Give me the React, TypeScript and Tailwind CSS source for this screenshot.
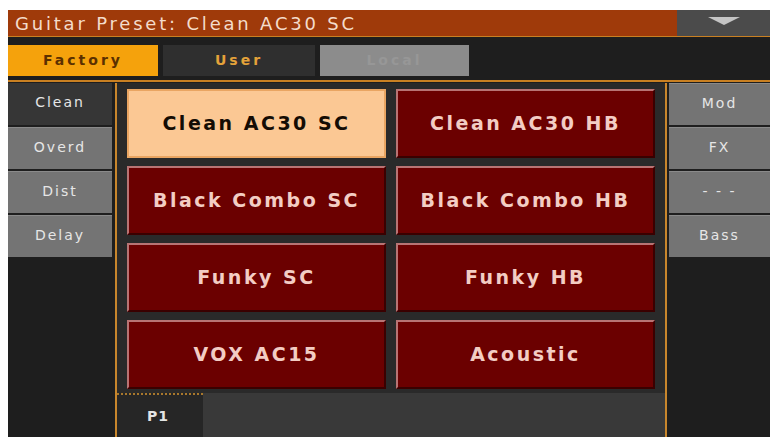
const PRESETS = [
  { name: "Clean AC30 SC", selected: true },
  { name: "Clean AC30 HB" },
  { name: "Black Combo SC" },
  { name: "Black Combo HB" },
  { name: "Funky SC" },
  { name: "Funky HB" },
  { name: "VOX AC15" },
  { name: "Acoustic" },
];

const LEFT_TABS = ["Clean", "Overd", "Dist", "Delay"];
const RIGHT_TABS = ["Mod", "FX", "- - -", "Bass"];

function SideTab({ label, active }: { label: string; active?: boolean }) {
  return (
    <div
      className={
        "h-[42px] flex items-center justify-center pb-[3px] text-[14px] tracking-[2px] text-[#e6e6e6] whitespace-nowrap " +
        (active ? "bg-[#363636]" : "bg-[#747474] border-t border-[#8a8a8a]")
      }
    >
      {label}
    </div>
  );
}

function PresetButton({ name, selected }: { name: string; selected?: boolean }) {
  if (selected) {
    return (
      <div className="flex items-center justify-center whitespace-nowrap bg-[#fbc894] border-2 border-[#e9a562] text-[#140c04] font-bold text-[19px] tracking-[2.5px]">
        {name}
      </div>
    );
  }
  return (
    <div className="flex items-center justify-center whitespace-nowrap bg-[#6b0000] border-t-2 border-l-2 border-[#b87474] border-b-2 border-r-2 border-b-[#3a0000] border-r-[#3a0000] text-[#f3cdc4] font-bold text-[19px] tracking-[2.5px]">
      {name}
    </div>
  );
}

export default function App() {
  return (
    <div className="w-[773px] h-[437px] bg-white pt-[10px] pl-[8px] pr-[3px] overflow-hidden font-['DejaVu_Sans',sans-serif]">
      <div className="flex flex-col h-full bg-[#1e1e1e]">
        {/* Title bar */}
        <div className="flex h-[26px]">
          <div className="flex-1 bg-[#9f3a0a] flex items-center pl-[7px] text-[18px] tracking-[2.8px] whitespace-nowrap text-[#f4dccb]">
            Guitar Preset: Clean AC30 SC
          </div>
          <div className="w-[93px] bg-[#4b4b4b] flex items-start justify-center pt-[7px]">
            <svg width="32" height="8" viewBox="0 0 32 8">
              <polygon points="0,0 32,0 16,8" fill="#c4c4c4" />
            </svg>
          </div>
        </div>
        <div className="h-[1px] bg-[#c98022]" />

        {/* Library tabs */}
        <div className="flex gap-[5px] pt-[8px] pb-[4px] h-[43px]">
          <div className="w-[150px] bg-[#f5a20c] flex items-center justify-center font-bold text-[14px] tracking-[3px] text-[#5b3000]">
            Factory
          </div>
          <div className="w-[152px] bg-[#2f2f2f] flex items-center justify-center font-bold text-[14px] tracking-[3px] text-[#e4a23a]">
            User
          </div>
          <div className="w-[149px] bg-[#8c8c8c] flex items-center justify-center font-bold text-[14px] tracking-[3px] text-[#979797]">
            Local
          </div>
        </div>
        <div className="h-[2px] bg-[#c98022]" />

        {/* Main area */}
        <div className="flex flex-1 pt-[1px]">
          <div className="w-[104px] flex flex-col gap-[2px]">
            {LEFT_TABS.map((t, i) => (
              <SideTab key={t} label={t} active={i === 0} />
            ))}
          </div>
          <div className="w-[3px]" />
          <div className="w-[552px] flex flex-col bg-[#2a2a2a] border-l-2 border-r-2 border-[#c8862c]">
            <div className="grid grid-cols-2 grid-rows-[repeat(4,69px)] gap-x-[10px] gap-y-[8px] pt-[6px] px-[10px]">
              {PRESETS.map((p) => (
                <PresetButton key={p.name} name={p.name} selected={p.selected} />
              ))}
            </div>
            <div className="flex-1 mt-[4px] bg-[#393939] flex">
              <div className="w-[86px] bg-[#262626] border-t-2 border-dotted border-[#a8782c] flex items-center pl-[30px] font-bold text-[14px] tracking-[1px] text-[#e4e4e4]">
                P1
              </div>
            </div>
          </div>
          <div className="w-[2px]" />
          <div className="flex-1 flex flex-col gap-[2px]">
            {RIGHT_TABS.map((t) => (
              <SideTab key={t} label={t} />
            ))}
          </div>
        </div>
      </div>
    </div>
  );
}
